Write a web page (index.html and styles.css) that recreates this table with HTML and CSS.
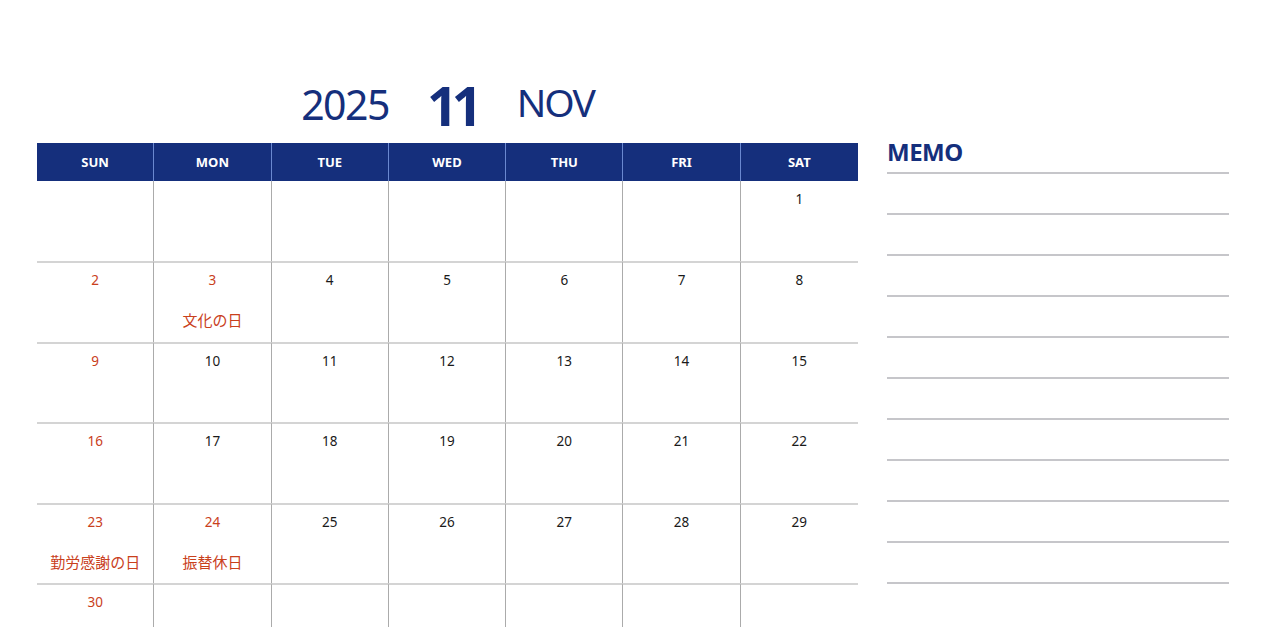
FILE: index.html
```html
<!DOCTYPE html>
<html lang="ja">
<head>
<meta charset="utf-8">
<title>2025 11 NOV</title>
<link rel="stylesheet" href="styles.css">
</head>
<body>
<div class="page">
  <section class="calendar">
    <div class="title">
      <span class="year">2025</span>
      <span class="month-num">11</span>
      <span class="month-name">NOV</span>
    </div>
    <div class="grid">
      <div class="head">SUN</div><div class="head">MON</div><div class="head">TUE</div><div class="head">WED</div><div class="head">THU</div><div class="head">FRI</div><div class="head">SAT</div>

      <div class="cell"></div><div class="cell"></div><div class="cell"></div><div class="cell"></div><div class="cell"></div><div class="cell"></div><div class="cell"><span class="num">1</span></div>

      <div class="cell row"><span class="num red">2</span></div>
      <div class="cell row"><span class="num red">3</span><span class="holiday">文化の日</span></div>
      <div class="cell row"><span class="num">4</span></div>
      <div class="cell row"><span class="num">5</span></div>
      <div class="cell row"><span class="num">6</span></div>
      <div class="cell row"><span class="num">7</span></div>
      <div class="cell row"><span class="num">8</span></div>

      <div class="cell row"><span class="num red">9</span></div>
      <div class="cell row"><span class="num">10</span></div>
      <div class="cell row"><span class="num">11</span></div>
      <div class="cell row"><span class="num">12</span></div>
      <div class="cell row"><span class="num">13</span></div>
      <div class="cell row"><span class="num">14</span></div>
      <div class="cell row"><span class="num">15</span></div>

      <div class="cell row"><span class="num red">16</span></div>
      <div class="cell row"><span class="num">17</span></div>
      <div class="cell row"><span class="num">18</span></div>
      <div class="cell row"><span class="num">19</span></div>
      <div class="cell row"><span class="num">20</span></div>
      <div class="cell row"><span class="num">21</span></div>
      <div class="cell row"><span class="num">22</span></div>

      <div class="cell row"><span class="num red">23</span><span class="holiday">勤労感謝の日</span></div>
      <div class="cell row"><span class="num red">24</span><span class="holiday">振替休日</span></div>
      <div class="cell row"><span class="num">25</span></div>
      <div class="cell row"><span class="num">26</span></div>
      <div class="cell row"><span class="num">27</span></div>
      <div class="cell row"><span class="num">28</span></div>
      <div class="cell row"><span class="num">29</span></div>

      <div class="cell row"><span class="num red">30</span></div>
      <div class="cell row"></div><div class="cell row"></div><div class="cell row"></div><div class="cell row"></div><div class="cell row"></div><div class="cell row"></div>
    </div>
  </section>
  <aside class="memo">
    <div class="memo-title">MEMO</div>
    <div class="line"></div><div class="line"></div><div class="line"></div><div class="line"></div><div class="line"></div><div class="line"></div><div class="line"></div><div class="line"></div><div class="line"></div><div class="line"></div><div class="line"></div>
  </aside>
</div>
</body>
</html>
```

FILE: styles.css
```css
html, body {
  margin: 0;
  padding: 0;
  background: #ffffff;
  height: 627px;
  overflow: hidden;
}
body {
  font-family: "Noto Sans", "Noto Sans CJK JP", sans-serif;
  color: #1a1a1a;
}
.page {
  display: flex;
  gap: 29px;
  padding-left: 37px;
}
.calendar {
  width: 821px;
  display: flex;
  flex-direction: column;
}
.title {
  height: 143px;
  display: flex;
  justify-content: center;
  align-items: flex-end;
  color: #152f7c;
  box-sizing: border-box;
}
.year {
  font-size: 41px;
  font-weight: 400;
  line-height: 1;
  margin-bottom: 18px;
  letter-spacing: -1.5px;
}
.month-num {
  font-size: 54px;
  font-weight: 700;
  line-height: 1;
  margin: 0 40px 11px 38px;
  letter-spacing: -6px;
}
.month-name {
  font-size: 39px;
  font-weight: 400;
  line-height: 1;
  margin-bottom: 22px;
  letter-spacing: -2px;
}
.grid {
  display: grid;
  grid-template-columns: repeat(7, 1fr);
  grid-template-rows: 38px 80.4px;
  grid-auto-rows: 80.4px;
}
.head {
  background: #152f7c;
  color: #ffffff;
  font-size: 13px;
  font-weight: 700;
  display: flex;
  align-items: center;
  justify-content: center;
  border-right: 1px solid #6a88d0;
}
.head:nth-child(7n) {
  border-right: none;
}
.cell {
  box-sizing: border-box;
  border-right: 1px solid #ababab;
  display: flex;
  flex-direction: column;
  align-items: center;
  padding-top: 10px;
}
.cell:nth-child(7n) {
  border-right: none;
}
.cell.row {
  border-top: 2px solid #d4d4d4;
  padding-top: 9px;
}
.num {
  font-size: 13.5px;
  line-height: 16px;
  color: #1a1a1a;
}
.num.red {
  color: #c9401c;
}
.holiday {
  font-size: 15px;
  line-height: 20px;
  margin-top: 22px;
  color: #c9401c;
  font-family: "Noto Sans CJK JP", sans-serif;
}
.memo {
  width: 342px;
  display: flex;
  flex-direction: column;
  padding-top: 137px;
}
.memo-title {
  font-size: 24px;
  font-weight: 700;
  color: #152f7c;
  line-height: 30px;
  height: 35px;
  letter-spacing: -0.5px;
}
.line {
  height: 2px;
  background: #c6c6ca;
  margin-bottom: 39px;
}
```
